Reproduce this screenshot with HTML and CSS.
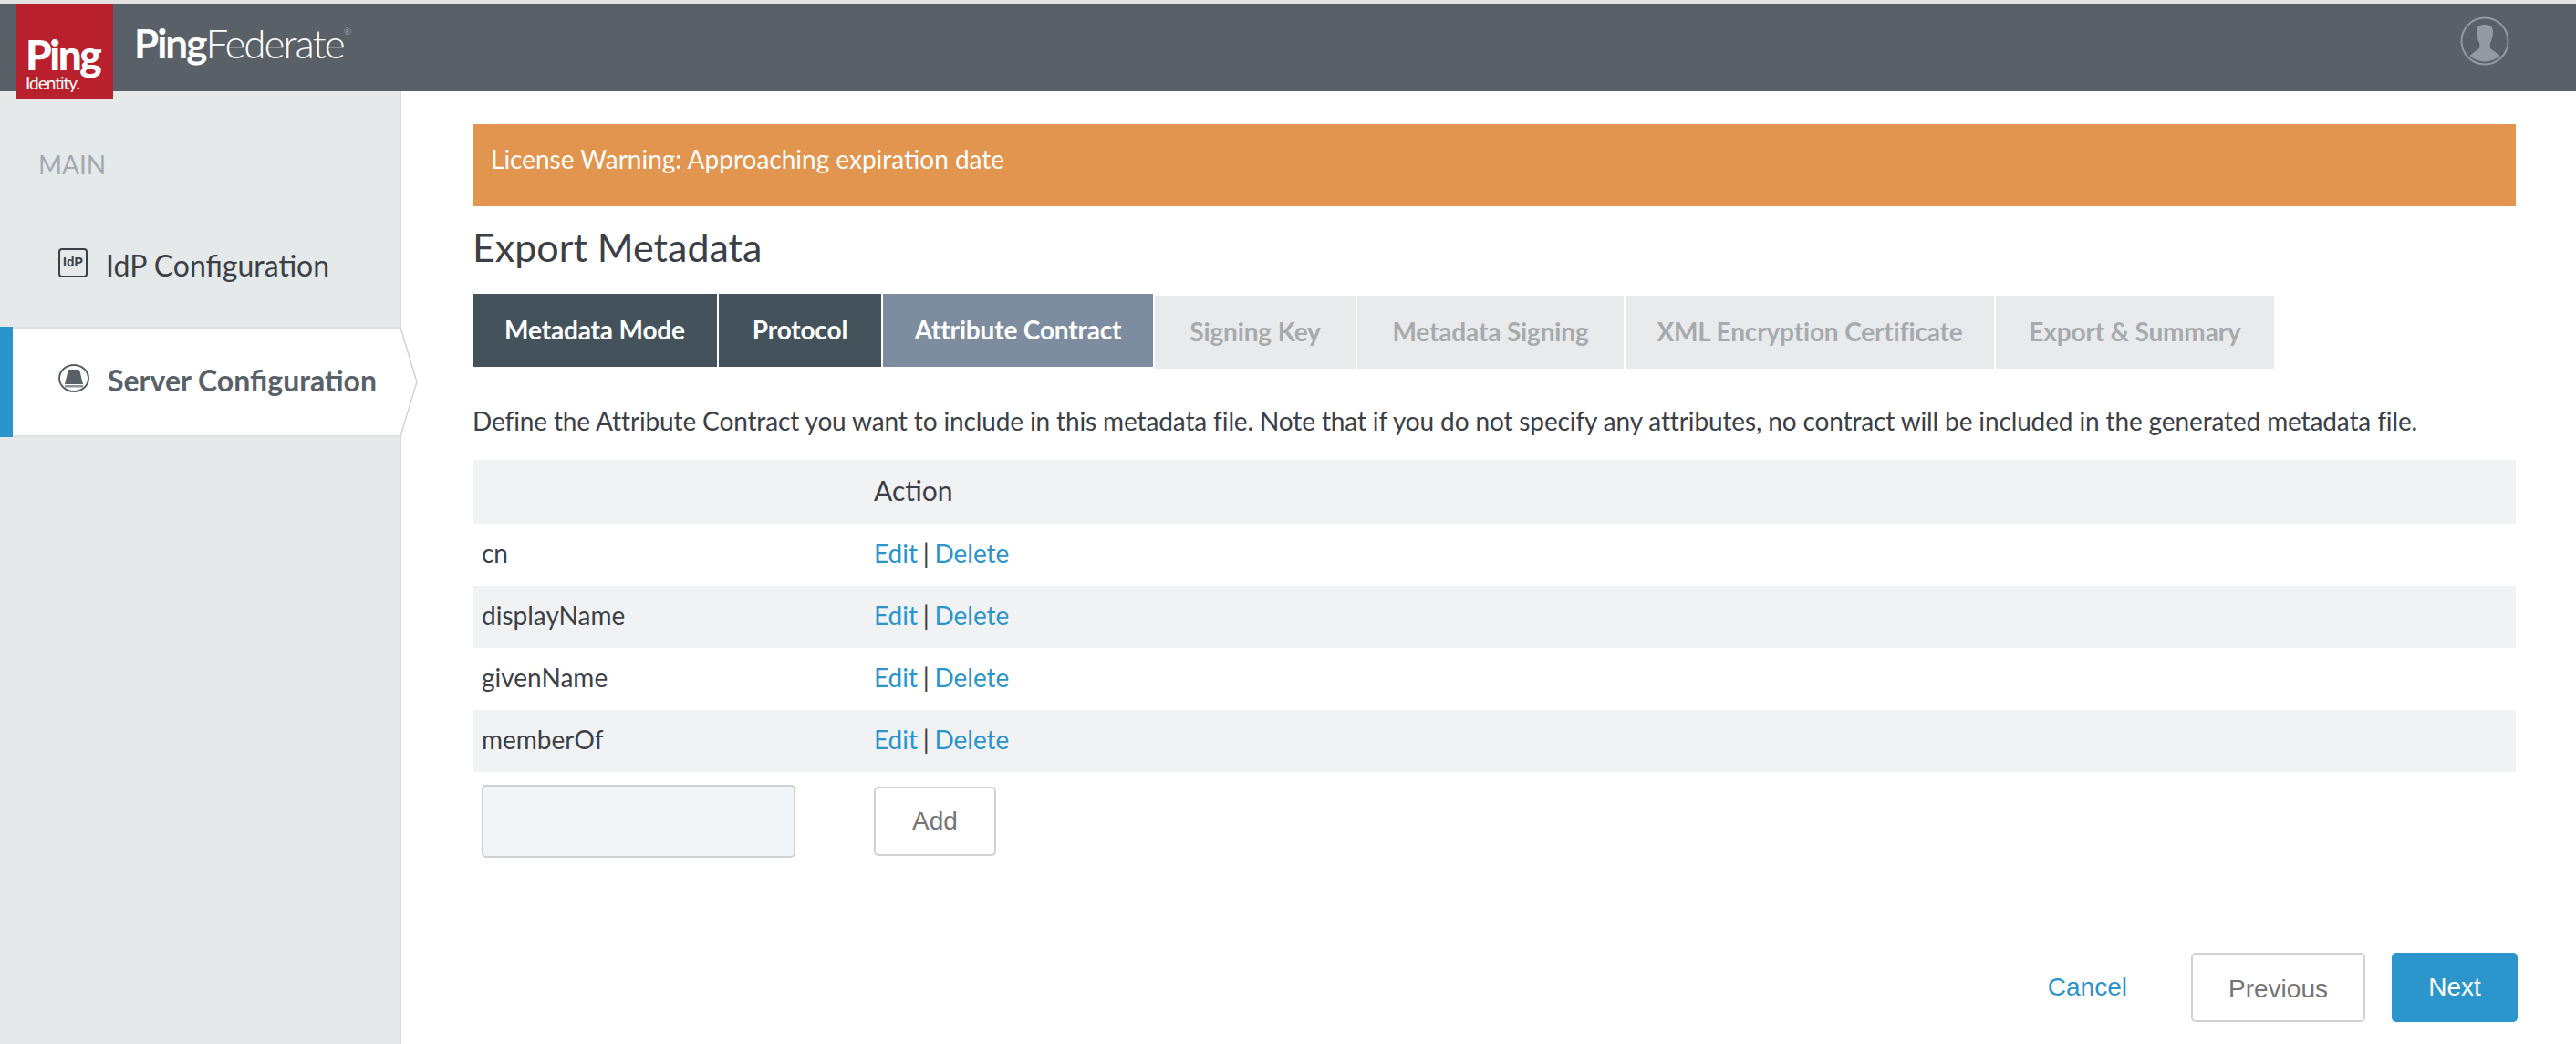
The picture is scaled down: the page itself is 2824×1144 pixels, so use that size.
FILE: index.html
```html
<!DOCTYPE html>
<html lang="en">
<head>
    <meta charset="UTF-8">
    <meta name="viewport" content="width=device-width, initial-scale=1.0">
    <title>Export Metadata</title>
    <link rel="stylesheet" href="styles.css">
</head>
<body>
    <header class="topbar">
        <div class="logo">
            <span class="logo-ping">Ping</span>
            <span class="logo-identity">Identity.</span>
        </div>
        <div class="product"><strong>Ping</strong>Federate<sup>®</sup></div>
        <svg class="user-icon" width="54" height="54" viewBox="0 0 54 54">
            <circle cx="27" cy="27" r="25.500" fill="none" stroke="#939aa1" stroke-width="2"/>
            <path d="M27 9c6 0 9 2 9 8 0 5-1.500 9-3 12-.5 2-.5 4 0 6l10.700 8A25 25 0 0 1 10.300 43L21 35c.5-2 .5-4 0-6-1.500-3-3-7-3-12 0-6 3-8 9-8z" fill="#939aa1"/>
        </svg>
    </header>

    <div class="layout">
        <nav class="sidebar">
            <div class="nav-title">MAIN</div>
            <a class="nav-item" href="#">
                <span class="idp-icon">IdP</span>
                <span>IdP Configuration</span>
            </a>
            <a class="nav-item selected" href="#">
                <svg class="server-icon" width="34" height="31" viewBox="0 0 34 31">
                    <ellipse cx="17" cy="15.500" rx="16" ry="14.500" fill="none" stroke="#5a6068" stroke-width="2"/>
                    <path d="M12 6h10q1 0 1.300 1L27 22H7l3.700-15Q11 6 12 6z" fill="#5a6068"/>
                    <rect x="7" y="23" width="20" height="2.500" fill="#8d9298"/>
                </svg>
                <span>Server Configuration</span>
                <svg class="nav-arrow" width="21" height="121" viewBox="0 0 21 121">
                    <path d="M1 1 19 60.500 1 120" fill="#fff" stroke="#d0d4d5" stroke-width="1.500"/>
                </svg>
            </a>
        </nav>

        <main class="content">
            <div class="warning">License Warning: Approaching expiration date</div>
            <h1>Export Metadata</h1>

            <div class="tabs">
                <a class="tab done" href="#">Metadata Mode</a>
                <a class="tab done" href="#">Protocol</a>
                <a class="tab active" href="#">Attribute Contract</a>
                <a class="tab" href="#">Signing Key</a>
                <a class="tab" href="#">Metadata Signing</a>
                <a class="tab" href="#">XML Encryption Certificate</a>
                <a class="tab" href="#">Export &amp; Summary</a>
            </div>

            <p class="intro">Define the Attribute Contract you want to include in this metadata file. Note that if you do not specify any attributes, no contract will be included in the generated metadata file.</p>

            <table class="attrs">
                <thead>
                    <tr><th></th><th>Action</th></tr>
                </thead>
                <tbody>
                    <tr><td>cn</td><td><a href="#">Edit</a> | <a href="#">Delete</a></td></tr>
                    <tr><td>displayName</td><td><a href="#">Edit</a> | <a href="#">Delete</a></td></tr>
                    <tr><td>givenName</td><td><a href="#">Edit</a> | <a href="#">Delete</a></td></tr>
                    <tr><td>memberOf</td><td><a href="#">Edit</a> | <a href="#">Delete</a></td></tr>
                </tbody>
            </table>

            <div class="add-row">
                <input class="attr-input" type="text">
                <button class="btn add-btn" type="button">Add</button>
            </div>

            <div class="actions">
                <a class="cancel" href="#">Cancel</a>
                <button class="btn prev-btn" type="button">Previous</button>
                <button class="btn next-btn" type="button">Next</button>
            </div>
        </main>
    </div>
</body>
</html>
```

FILE: styles.css
```css
* {
    box-sizing: border-box;
}

body {
    margin: 0;
    height: 1144px;
    overflow: hidden;
    background-color: #fff;
    color: #3c4046;
    font-family: Lato, "Open Sans", sans-serif;
    font-size: 28px;
    border-top: 4px solid #e2e2e2;
}

a {
    color: #2b94cc;
    text-decoration: none;
}

/* top bar */
.topbar {
    position: relative;
    z-index: 2;
    display: flex;
    align-items: flex-start;
    height: 96px;
    background-color: #5a6068;
    padding-left: 18px;
}

.logo {
    width: 106px;
    height: 104px;
    background-color: #b8202e;
    color: #fff;
    padding: 34px 0 0 10px;
    font-weight: 900;
}

.logo-ping {
    display: block;
    font-size: 46px;
    line-height: 44px;
    letter-spacing: -2.500px;
}

.logo-identity {
    display: block;
    font-size: 19px;
    line-height: 18px;
    font-weight: 400;
    letter-spacing: -1px;
}

.product {
    margin: 16px 0 0 23px;
    color: #fff;
    font-size: 44px;
    line-height: 54px;
    font-weight: 300;
    letter-spacing: -2px;
}

.product strong {
    font-weight: 700;
}

.product sup {
    font-size: 10px;
    line-height: 0;
    vertical-align: 26px;
    color: #c2c5c8;
}

.user-icon {
    margin: 14px 73px 0 auto;
}

.layout {
    display: flex;
    height: 1044px;
}

/* left nav */
.sidebar {
    width: 440px;
    flex-shrink: 0;
    background-color: #e5e9ea;
    border-right: 2px solid #d9dddf;
}

.nav-title {
    padding: 62px 0 0 42px;
    height: 122px;
    color: #a3a9ad;
    font-size: 28px;
    line-height: 36px;
}

.nav-item {
    position: relative;
    display: flex;
    align-items: center;
    gap: 20px;
    height: 121px;
    padding: 16px 0 0 64px;
    color: #3c4046;
    font-size: 32px;
}

.idp-icon {
    width: 32px;
    height: 32px;
    margin-bottom: 6px;
    border: 2px solid #3c4046;
    border-radius: 4px;
    font-family: "Liberation Sans", sans-serif;
    font-size: 14px;
    font-weight: 700;
    line-height: 27px;
    text-align: center;
}

.nav-item.selected {
    width: 439px;
    margin-top: 15px;
    padding: 0 0 5px 64px;
    background-color: #fff;
    color: #5a6068;
    font-weight: 700;
    border-top: 2px solid #dcdfe1;
    border-bottom: 2px solid #dcdfe1;
}

.nav-item.selected::before {
    content: "";
    position: absolute;
    left: 0;
    top: -2px;
    bottom: -2px;
    width: 14px;
    background-color: #2b94cc;
}

.server-icon {
    margin-bottom: 4px;
}

.nav-arrow {
    position: absolute;
    left: 438px;
    top: -2px;
}

/* main column */
.content {
    flex: 1;
    padding: 36px 66px 0 78px;
}

.warning {
    height: 90px;
    padding: 20px 0 0 20px;
    background-color: #e2954f;
    color: #fff;
    font-size: 28px;
    line-height: 36px;
}

h1 {
    margin: 16px 0 0;
    height: 80px;
    font-size: 43px;
    line-height: 58px;
    font-weight: 400;
    color: #3c4046;
}

.tabs {
    display: flex;
    align-items: flex-start;
    gap: 2px;
}

.tab {
    height: 80px;
    margin-top: 2px;
    background-color: #e9eaec;
    color: #a7aaad;
    font-size: 28px;
    font-weight: 700;
    line-height: 78px;
    letter-spacing: -.15px;
    text-align: center;
    white-space: nowrap;
}

.tab:nth-child(1) { width: 268px; }
.tab:nth-child(2) { width: 178px; }
.tab:nth-child(3) { width: 296px; }
.tab:nth-child(4) { width: 220px; }
.tab:nth-child(5) { width: 292px; }
.tab:nth-child(6) { width: 404px; }
.tab:nth-child(7) { width: 305px; }

.tab.done,
.tab.active {
    margin-top: 0;
    color: #fff;
    background-color: #44525c;
}

.tab.active {
    background-color: #7d8c9e;
}

.intro {
    margin: 34px 0 0;
    height: 66px;
    line-height: 46px;
    letter-spacing: -.13px;
    white-space: nowrap;
}

.attrs {
    width: 100%;
    border-collapse: collapse;
}

.attrs th {
    height: 70px;
    padding: 0 0 4px;
    background-color: #f1f2f4;
    font-size: 30px;
    font-weight: 400;
    text-align: left;
}

.attrs th:first-child,
.attrs td:first-child {
    width: 440px;
    padding-left: 10px;
}

.attrs td {
    height: 68px;
    padding: 0 0 4px;
    word-spacing: -1.500px;
}

.attrs tbody tr:nth-child(even) {
    background-color: #f1f2f4;
}

.add-row {
    display: flex;
    align-items: center;
    padding: 14px 0 0 10px;
}

.attr-input {
    width: 344px;
    height: 80px;
    margin-right: 86px;
    border: 2px solid #cfd2d4;
    border-radius: 5px;
    background-color: #f1f5f8;
}

.btn {
    height: 76px;
    border: 2px solid #d2d2d2;
    border-radius: 5px;
    background-color: #fff;
    color: #757575;
    font-family: "Liberation Sans", sans-serif;
    font-size: 28px;
}

.add-btn {
    width: 134px;
}

.actions {
    display: flex;
    align-items: center;
    justify-content: flex-end;
    margin: 104px -2px 0 0;
}

.cancel {
    margin-right: 70px;
    font-family: "Liberation Sans", sans-serif;
}

.prev-btn {
    width: 191px;
    margin-right: 29px;
    padding-top: 5px;
}

.next-btn {
    width: 138px;
    border: none;
    background-color: #2c95cc;
    color: #fff;
}
```
